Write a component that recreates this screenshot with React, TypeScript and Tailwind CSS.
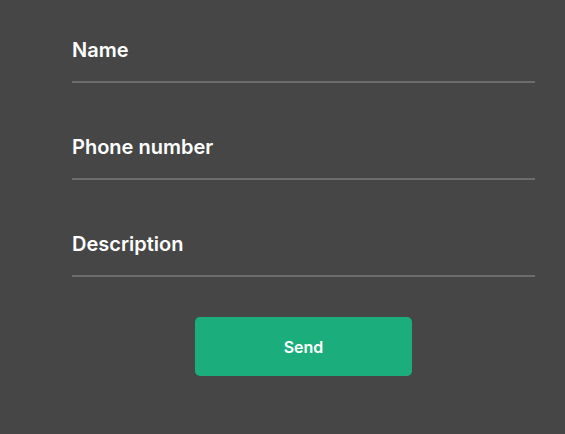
const fields = ['Name', 'Phone number', 'Description']

const App = () => {
    return (
        <div
            className="w-[565px] h-[434px] bg-[#464646] pl-[72px] pr-[30px] pt-[38px]"
            style={{ fontFamily: 'Inter, "Open Sans", sans-serif' }}
        >
            <form className="flex flex-col" onSubmit={(e) => e.preventDefault()}>
                {fields.map((label, i) => (
                    <div
                        key={label}
                        className={i === fields.length - 1 ? 'flex flex-col mb-[40px]' : 'flex flex-col mb-[52px]'}
                    >
                        <label className="text-[20px] leading-[24px] font-semibold text-white">
                            {label}
                        </label>
                        <input className="h-[19px] bg-transparent outline-none text-white border-b-2 border-[#6c6c6c] box-content" />
                    </div>
                ))}
                <button
                    type="submit"
                    className="mx-auto w-[217px] h-[59px] rounded-[5px] bg-[#1bae7c] text-white text-[16px] font-semibold"
                >
                    Send
                </button>
            </form>
        </div>
    )
}

export default App
